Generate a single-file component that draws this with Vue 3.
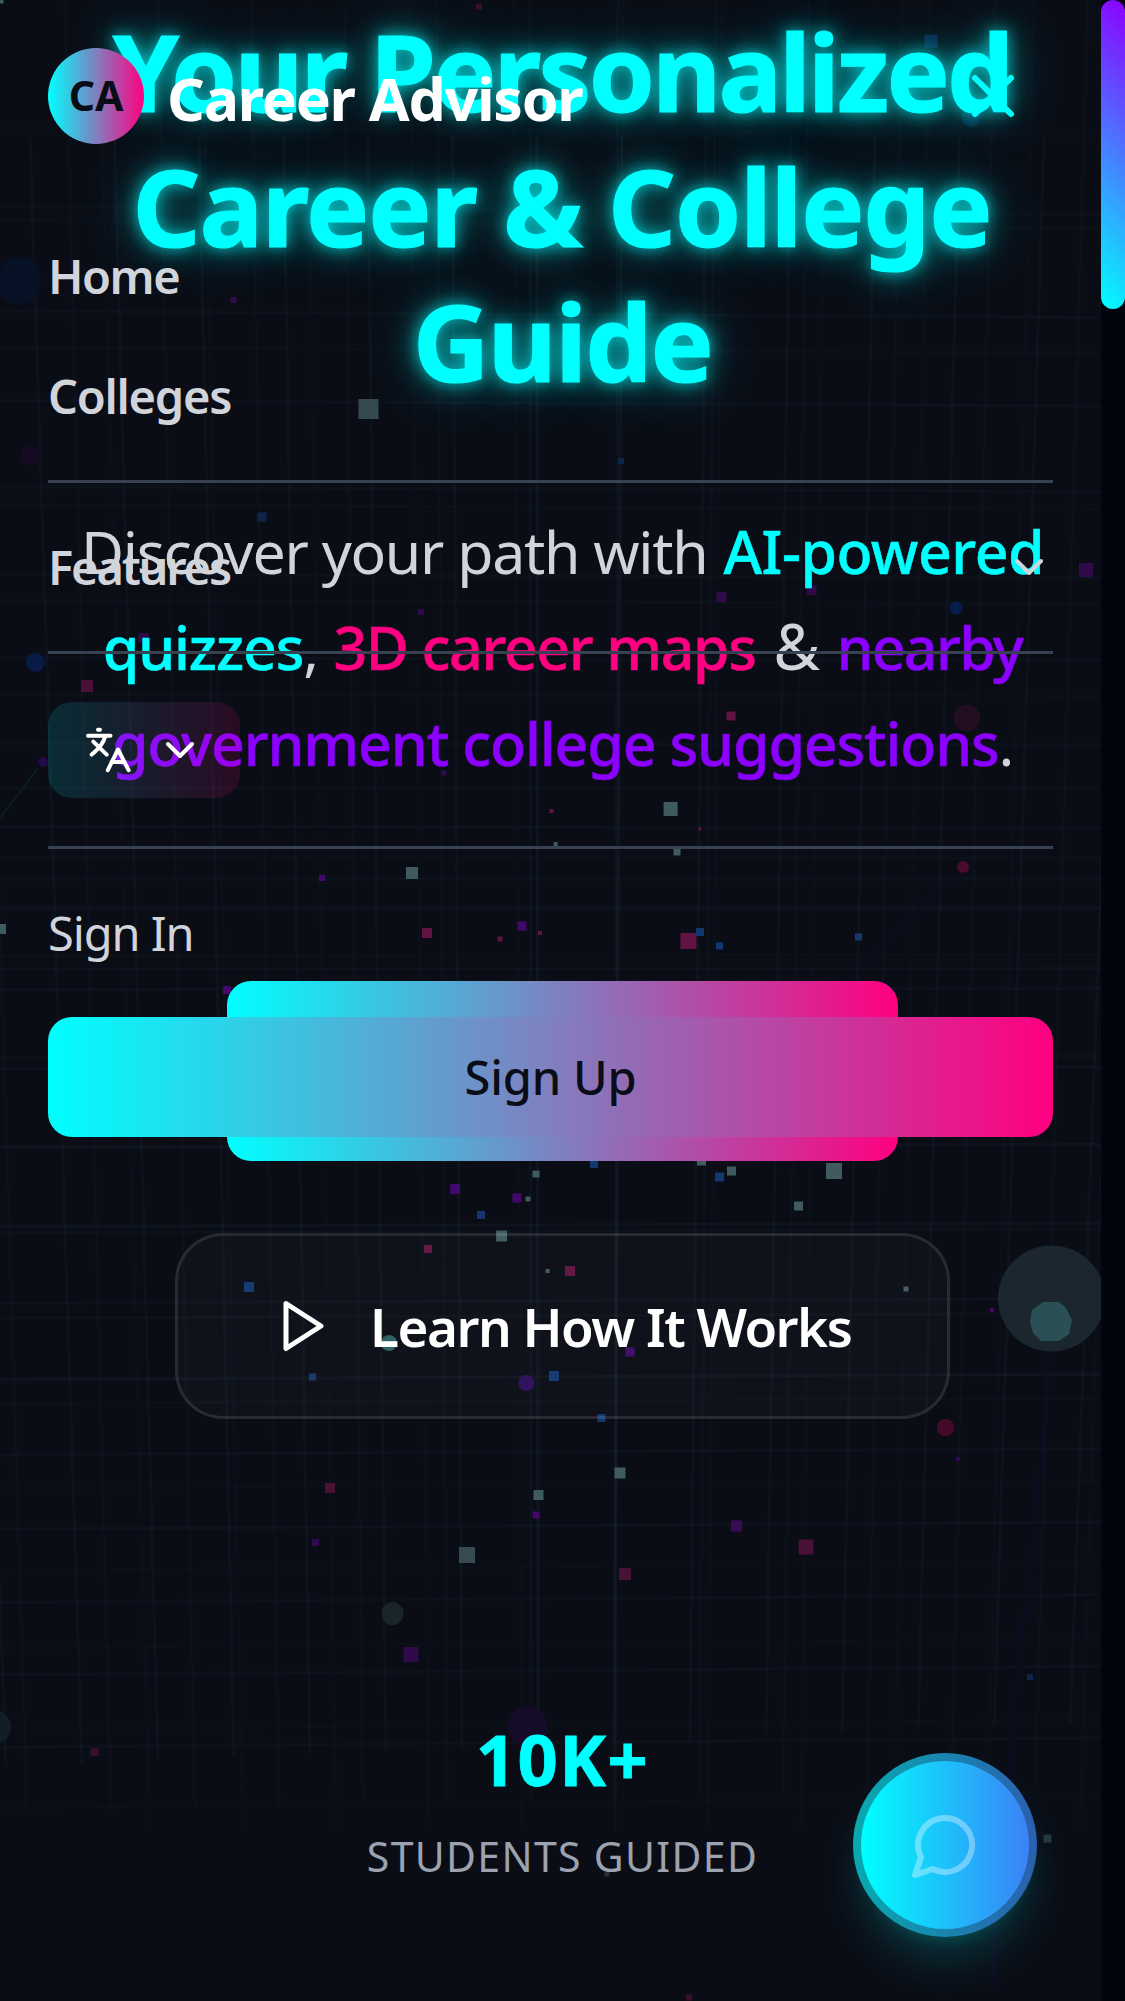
<script setup>
const palette = {
  teal: '#405b60',
  teal2: '#364c52',
  mist: '#25343a',
  mist2: '#344950',
  pink: '#611443',
  plum: '#3a0f2b',
  plum2: '#4a1136',
  purple: '#42096c',
  violet: '#300a4a',
  violet2: '#380a58',
  blue: '#12386f',
  navy: '#0f2449',
}

// Square particles: centre x, centre y, side, colour
const squares = [
  [1, 1, 5, 'teal'], [479, 6.5, 6, 'plum'], [233.5, 300, 6, 'violet'], [368.5, 409, 20, 'mist2'], [931, 41, 13, 'navy'],
  [262, 517, 9, 'navy'], [421, 612, 6, 'violet'], [143.5, 638, 10, 'violet'], [87, 686, 12, 'plum2'], [444, 773, 5, 'violet'],
  [551.5, 811, 4, 'pink'], [621, 461, 6, 'navy'], [1086, 570, 14, 'violet'], [721.5, 597, 10, 'violet'], [811.5, 590, 10, 'violet'],
  [731, 716, 9, 'pink'], [670.6, 809, 14, 'teal'], [699.5, 829, 3, 'pink'], [555.6, 844, 4, 'teal'], [322, 878, 6, 'purple'],
  [412, 873, 12, 'teal'], [1, 929, 10, 'teal'], [427, 933, 10, 'pink'], [500, 939, 5, 'pink'], [522, 926, 9, 'purple'],
  [540, 933, 4, 'pink'], [227, 990, 8, 'purple'], [536, 1174, 7, 'teal'], [455, 1189, 10, 'purple'], [517, 1198, 9, 'purple'],
  [528, 1199, 5, 'teal'], [481, 1215, 8, 'blue'], [594, 1164, 8, 'blue'], [501.6, 1236, 11, 'teal'], [677, 852, 7, 'teal'],
  [688.5, 941, 16, 'pink'], [700, 932, 8, 'blue'], [719.5, 946, 7, 'blue'], [858.5, 937, 7, 'blue'], [701.5, 1161, 9, 'teal'],
  [731.5, 1171, 9, 'teal'], [719.6, 1177, 9, 'blue'], [834, 1171, 16, 'teal'], [798.5, 1206, 9, 'teal'], [428, 1249, 8, 'pink'],
  [547.6, 1271, 4, 'teal'], [570, 1271, 10, 'pink'], [249, 1287, 10, 'blue'], [312.6, 1377, 7, 'blue'], [554, 1376, 10, 'blue'],
  [330, 1488, 10, 'plum2'], [538.5, 1495, 10, 'teal'], [536, 1515, 7, 'purple'], [315.5, 1542.5, 7, 'violet'], [467, 1555, 16, 'teal2'],
  [630, 1352, 9, 'purple'], [906, 1289, 5, 'teal'], [992, 1310, 4, 'purple'], [601.5, 1418, 8, 'blue'], [958, 1459, 4, 'violet'],
  [620, 1473, 11, 'teal'], [736.5, 1526, 11, 'violet2'], [806, 1547, 15, 'plum2'], [625, 1574, 12, 'plum2'], [411, 1654.5, 15, 'violet'],
  [94.5, 1752, 8, 'plum'], [1030, 1677, 6, 'navy'], [1047.5, 1838.5, 8, 'mist'], [607, 1874, 5, 'mist'], [689, 1997.5, 6, 'plum'],
]

// Distant spheres: centre x, centre y, rx, ry, colour
const spheres = [
  [19, 281, 22, 24, '#081226'], [971, 117, 9, 10, '#08203a'], [30.6, 455, 9.5, 10, '#160b23'], [35.3, 662.5, 9.5, 9.5, '#081b46'],
  [43, 762, 5, 5, '#220a45'], [956, 608, 6.5, 6.5, '#071c4a'], [967, 718, 13.5, 13.5, '#210e20'], [963, 867, 6, 6, '#4b0a2e'],
  [389, 1343, 8, 8, '#2a5f60'], [526.5, 1383, 8, 8, '#2c0d5c'], [392.6, 1613.5, 11, 11.5, '#19242b'], [945.5, 1427.5, 8.7, 8.7, '#450a29'],
  [527.7, 1727, 20, 20, '#160b29'], [-6, 1727, 17, 17, '#131d25'], [1051.5, 1298.5, 53.5, 53, '#1b262e'],
]

const range = (a, b) => Array.from({ length: b - a + 1 }, (_, i) => a + i)
const columns = [
  ...range(-7, 7).map((i) => ({ x1: 537 + i * 84.5, y1: 136, x2: 538 + i * 76, y2: 1745 - i * 3, o: i === 0 ? 0.055 : 0.04 })),
  ...range(-6, 7).map((i) => ({ x1: 530 + i * 93, y1: 0, x2: 531 + i * 84, y2: 1800 - i * 2, o: i === 0 ? 0.03 : 0.022 })),
  ...range(-5, 6).map((i) => ({ x1: 618 + i * 104, y1: 0, x2: 615 + i * 93, y2: 1830, o: i === 0 ? 0.04 : 0.014 })),
]
const rows = [
  [131, 0.02], [210, 0.03], [224, 0.03], [314, 0.05], [350, 0.03], [403, 0.05], [489, 0.05], [507, 0.03], [576, 0.04], [602, 0.03], [659, 0.05],
  [695, 0.03], [744, 0.05], [788, 0.04], [827, 0.05], [858, 0.03], [879, 0.05], [908, 0.08], [955, 0.03], [969, 0.06], [989, 0.06],
  [1057, 0.04], [1068, 0.06], [1146, 0.08], [1225, 0.07], [1231, 0.04], [1301, 0.06], [1316, 0.04], [1377, 0.07], [1401, 0.03], [1452, 0.06],
  [1485, 0.02], [1526, 0.06], [1567, 0.02], [1599, 0.05], [1644, 0.02], [1671, 0.05], [1725, 0.02], [1743, 0.04], [1803, 0.02],
].map(([y, o]) => ({ y1: y - (900 - y) * 0.005, y2: y + (900 - y) * 0.006, o: o * 0.65 }))
</script>

<template>
  <div class="page">
    <svg class="scene" width="1101" height="2001" viewBox="0 0 1101 2001" aria-hidden="true">
      <g stroke="#5f9db0" stroke-width="3">
        <line v-for="(c, i) in columns" :key="'c' + i" :x1="c.x1" :y1="c.y1" :x2="c.x2" :y2="c.y2" :opacity="c.o" />
        <line v-for="(r, i) in rows" :key="'r' + i" x1="0" :y1="r.y1" x2="1101" :y2="r.y2" :opacity="r.o" />
      </g>
      <path d="M38 768 0 818" stroke="#0b1d24" stroke-width="2" />
      <path d="M956 872 848 981" stroke="#0d0c24" stroke-width="2" />
      <path d="M1048 1350Q1040 1500 1025 1610T992 1987" stroke="#0e0c25" stroke-width="2" fill="none" />
      <ellipse v-for="(s, i) in spheres" :key="'s' + i" :cx="s[0]" :cy="s[1]" :rx="s[2]" :ry="s[3]" :fill="s[4]" />
      <path d="M1043 1302h16l7 6 6 12-3 14-10 7h-18l-8-8-3-11 2-12z" fill="#2a5055" />
      <rect v-for="(p, i) in squares" :key="'p' + i" :x="p[0] - p[2] / 2" :y="p[1] - p[2] / 2" :width="p[2]" :height="p[2]" :fill="palette[p[3]]" />
    </svg>

    <main class="hero">
      <h1>
        <span class="l1">Your Personalized</span>
        <span class="l2">Career &amp; College</span>
        <span class="l3">Guide</span>
      </h1>
      <div class="lead">
        <div class="row1">Discover your path with <b class="cyan">AI-powered</b></div>
        <div class="row2"><b class="cyan">quizzes</b>, <b class="rose">3D career maps</b> <span class="amp">&amp;</span> <b class="grape near">nearby</b></div>
        <div class="row3"><b class="grape">government college suggestions</b>.</div>
      </div>
      <div class="primary"></div>
      <button class="learn">
        <svg width="60" height="60" viewBox="0 0 24 24" fill="none" stroke="#fff" stroke-width="2" stroke-linecap="round" stroke-linejoin="round"><path d="M6 3 20 12 6 21z" /></svg>
        <span>Learn How It Works</span>
      </button>
      <div class="stat">10K+</div>
      <div class="caption">STUDENTS GUIDED</div>
    </main>

    <nav class="menu">
      <header>
        <div class="avatar">CA</div>
        <div class="brand">Career Advisor</div>
        <svg class="close" width="72" height="72" viewBox="0 0 24 24" fill="none" stroke="#0ff" stroke-width="2" stroke-linecap="round"><path d="M18 6 6 18M6 6l12 12" /></svg>
      </header>
      <a class="item home">Home</a>
      <a class="item colleges">Colleges</a>
      <hr />
      <a class="item features"><span>Features</span>
        <svg width="48" height="48" viewBox="0 0 24 24" fill="none" stroke="#d1d5db" stroke-width="2" stroke-linecap="round" stroke-linejoin="round"><path d="m6 9 6 6 6-6" /></svg>
      </a>
      <hr />
      <button class="lang">
        <svg width="48" height="48" viewBox="0 0 48 48" fill="none" stroke="#fff" stroke-width="4" stroke-linecap="round" stroke-linejoin="round">
          <path d="M14 3.8h2M4 9.8h22.5M9.3 15.6 22.7 28.6M7.7 28.6C14 23 19.5 18 21.3 10M23.8 44.2 34 23.5 44.6 44.2M27.5 36h13" />
        </svg>
        <svg width="48" height="48" viewBox="0 0 24 24" fill="none" stroke="#fff" stroke-width="2" stroke-linecap="round" stroke-linejoin="round"><path d="m6 9 6 6 6-6" /></svg>
      </button>
      <hr />
      <a class="item signin">Sign In</a>
      <button class="signup">Sign Up</button>
    </nav>

    <button class="chat">
      <span class="chat-face">
        <svg width="72" height="72" viewBox="0 0 24 24" fill="none" stroke="#fff" stroke-width="2" stroke-linecap="round" stroke-linejoin="round"><path d="M7.9 20A9 9 0 1 0 4 16.1L2 22Z" /></svg>
      </span>
    </button>

    <div class="scrollbar"><div class="thumb"></div></div>
  </div>
</template>

<style>
body { background: #0a0d16; }
</style>

<style scoped>
.page {
  position: relative;
  width: 1125px;
  height: 2001px;
  overflow: hidden;
  background: #0a0d16;
  font-family: "Noto Sans", "Open Sans", sans-serif;
  color: #d1d5db;
}
button { border: 0; padding: 0; font-family: inherit; }
.scene { position: absolute; top: 0; left: 0; }

.hero {
  position: relative;
  display: flex;
  flex-direction: column;
  align-items: center;
  padding-top: 4px;
}
h1 {
  margin: 0;
  display: flex;
  flex-direction: column;
  align-items: center;
  font-size: 106px;
  line-height: 135px;
  font-weight: 700;
  color: #0ff;
  white-space: nowrap;
  -webkit-text-stroke: 1.2px #0ff;
  text-shadow: 0 0 15px rgba(0, 255, 255, 0.65), 0 0 30px rgba(0, 255, 255, 0.5), 0 0 60px rgba(0, 255, 255, 0.3);
}
.l1 { letter-spacing: -2.75px; margin-left: -1px; }
.l2 { letter-spacing: -1.1px; margin-left: -1px; }
.l3 { letter-spacing: -1.6px; }
.lead {
  margin-top: 94px;
  display: flex;
  flex-direction: column;
  align-items: center;
  font-size: 59px;
  line-height: 96px;
  white-space: nowrap;
  letter-spacing: -1.29px;
}
.lead b { font-weight: 500; -webkit-text-stroke: 0.5px currentColor; }
.row1 b { letter-spacing: -0.5px; margin-left: 2px; }
.row2 { word-spacing: 1.6px; }
.row2 b { letter-spacing: -1.1px; word-spacing: 0; }
.row2 b.rose { letter-spacing: -1.4px; }
.row2 b.near { letter-spacing: -1.7px; }
.row3 b { letter-spacing: -1.15px; }
.amp { font-size: 64px; line-height: 60px; padding: 0 2px; }
.cyan { color: #0ff; }
.rose { color: #ff0080; }
.grape { color: #8b00ff; }
.primary {
  margin-top: 190px;
  width: 671px;
  height: 180px;
  border-radius: 24px;
  background: linear-gradient(90deg, #0ff, #ff0080);
}
.learn {
  box-sizing: border-box;
  margin-top: 72px;
  width: 775px;
  height: 186px;
  border: 3px solid rgba(255, 255, 255, 0.1);
  border-radius: 48px;
  background: rgba(255, 255, 255, 0.025);
  display: flex;
  align-items: center;
  padding-left: 93px;
  gap: 39px;
  color: #fff;
  font-size: 53px;
  font-weight: 600;
  letter-spacing: -1.5px;
  white-space: nowrap;
}
.learn span { padding-top: 1px; }
.stat {
  margin-top: 292px;
  font-size: 70.5px;
  line-height: 96px;
  font-weight: 700;
  letter-spacing: 1.4px;
  color: #0ff;
  -webkit-text-stroke: 0.8px #0ff;
}
.caption {
  margin-top: 19px;
  font-size: 41px;
  line-height: 60px;
  letter-spacing: 1.32px;
  color: #9ca3af;
}

.menu {
  position: absolute;
  top: 0;
  left: 0;
  width: 1101px;
  box-sizing: border-box;
  padding: 48px;
  display: flex;
  flex-direction: column;
  gap: 48px;
}
header { display: flex; align-items: center; height: 96px; margin-bottom: 48px; }
.avatar {
  width: 96px;
  height: 96px;
  border-radius: 50%;
  background: linear-gradient(90deg, #0ff, #ff0080);
  color: #0a0d16;
  font-size: 41px;
  font-weight: 700;
  line-height: 95px;
  text-align: center;
}
.brand {
  margin-left: 23px;
  padding-top: 4px;
  font-size: 59px;
  line-height: 84px;
  font-weight: 700;
  letter-spacing: -1.25px;
  color: #fff;
}
.close { margin-left: auto; margin-right: 24px; }
.item { display: flex; align-items: center; justify-content: space-between; height: 72px; font-size: 47px; line-height: 73px; font-weight: 600; color: #d1d5db; }
.home { letter-spacing: -1.5px; }
.colleges { letter-spacing: -1.25px; }
.features { letter-spacing: -2.2px; }
.signin { font-weight: 400; letter-spacing: -1.07px; }
hr { margin: 0; border: 0; height: 3px; background: #374151; }
.lang {
  width: 192px;
  height: 96px;
  border-radius: 24px;
  display: flex;
  align-items: center;
  justify-content: center;
  gap: 24px;
  background: linear-gradient(90deg, rgba(0, 255, 255, 0.13), rgba(255, 0, 128, 0.13));
}
.signup {
  height: 120px;
  border-radius: 24px;
  background: linear-gradient(90deg, #0ff, #ff0080);
  color: #0a0d16;
  font-size: 47px;
  font-weight: 500;
  letter-spacing: -0.2px;
}

.chat {
  position: absolute;
  left: 853px;
  top: 1753px;
  width: 184px;
  height: 184px;
  border-radius: 50%;
  display: flex;
  align-items: center;
  justify-content: center;
  background: linear-gradient(90deg, #08aab0, #2b5fae);
  box-shadow: 0 30px 45px -9px rgba(0, 255, 255, 0.18), 0 12px 18px -12px rgba(0, 255, 255, 0.18);
}
.chat-face {
  width: 168px;
  height: 168px;
  border-radius: 50%;
  display: flex;
  align-items: center;
  justify-content: center;
  background: linear-gradient(90deg, #0ff, #3b82f6);
}
.chat-face svg { opacity: 0.35; }

.scrollbar { position: absolute; top: 0; right: 0; width: 24px; height: 2001px; background: #02050e; }
.thumb { height: 309px; border-radius: 12px; background: linear-gradient(45deg, #0ff, #8b00ff); }
</style>
